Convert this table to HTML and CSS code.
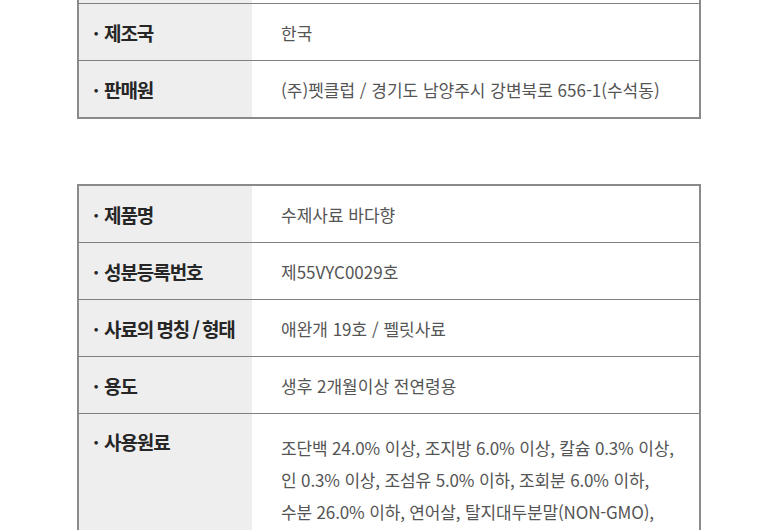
FILE: index.html
```html
<!DOCTYPE html>
<html lang="ko">
<head>
<meta charset="utf-8">
<title>제품 정보</title>
<link rel="stylesheet" href="styles.css">
</head>
<body>
<div class="page">
  <div class="spec spec-first">
    <div class="row">
      <div class="label"></div>
      <div class="value"></div>
    </div>
    <div class="row">
      <div class="label"><span class="dot">·</span>제조국</div>
      <div class="value">한국</div>
    </div>
    <div class="row">
      <div class="label"><span class="dot">·</span>판매원</div>
      <div class="value">(주)펫클럽 / 경기도 남양주시 강변북로 656-1(수석동)</div>
    </div>
  </div>

  <div class="spec">
    <div class="row">
      <div class="label"><span class="dot">·</span>제품명</div>
      <div class="value">수제사료 바다향</div>
    </div>
    <div class="row">
      <div class="label"><span class="dot">·</span>성분등록번호</div>
      <div class="value">제55VYC0029호</div>
    </div>
    <div class="row">
      <div class="label"><span class="dot">·</span>사료의 명칭 / 형태</div>
      <div class="value">애완개 19호 / 펠릿사료</div>
    </div>
    <div class="row">
      <div class="label"><span class="dot">·</span>용도</div>
      <div class="value">생후 2개월이상 전연령용</div>
    </div>
    <div class="row row-tall">
      <div class="label"><span class="dot">·</span>사용원료</div>
      <div class="value value-multi">조단백 24.0% 이상, 조지방 6.0% 이상, 칼슘 0.3% 이상,<br>인 0.3% 이상, 조섬유 5.0% 이하, 조회분 6.0% 이하,<br>수분 26.0% 이하, 연어살, 탈지대두분말(NON-GMO),</div>
    </div>
  </div>
</div>
</body>
</html>
```

FILE: styles.css
```css
html, body {
  margin: 0;
  padding: 0;
  background: #ffffff;
}

body {
  font-family: "Noto Sans CJK KR", "Noto Sans", sans-serif;
  overflow: hidden;
}

.page {
  padding-left: 77px;
  display: flex;
  flex-direction: column;
  gap: 65px;
}

.spec {
  width: 624px;
  box-sizing: border-box;
  border: 2px solid #8a8a8a;
  display: flex;
  flex-direction: column;
}

.spec-first {
  margin-top: -55px;
}

.row {
  display: grid;
  grid-template-columns: 173px 1fr;
  min-height: 56px;
  border-top: 1px solid #808080;
}

.row:first-child {
  border-top: none;
}

.label {
  background: #eeeeee;
  color: #262626;
  font-size: 19px;
  font-weight: 700;
  letter-spacing: -1.1px;
  word-spacing: -1px;
  padding-left: 14px;
  display: flex;
  align-items: center;
  white-space: pre;
}

.dot {
  margin-right: 6px;
}

.value {
  color: #555555;
  font-size: 17px;
  letter-spacing: 0;
  padding-left: 29px;
  display: flex;
  align-items: center;
}

.row-tall {
  min-height: 140px;
}

.row-tall .label {
  align-items: flex-start;
  padding-top: 16px;
  line-height: 24px;
}

.value-multi {
  display: block;
  padding-top: 18px;
  line-height: 32px;
  letter-spacing: -0.15px;
}
```
